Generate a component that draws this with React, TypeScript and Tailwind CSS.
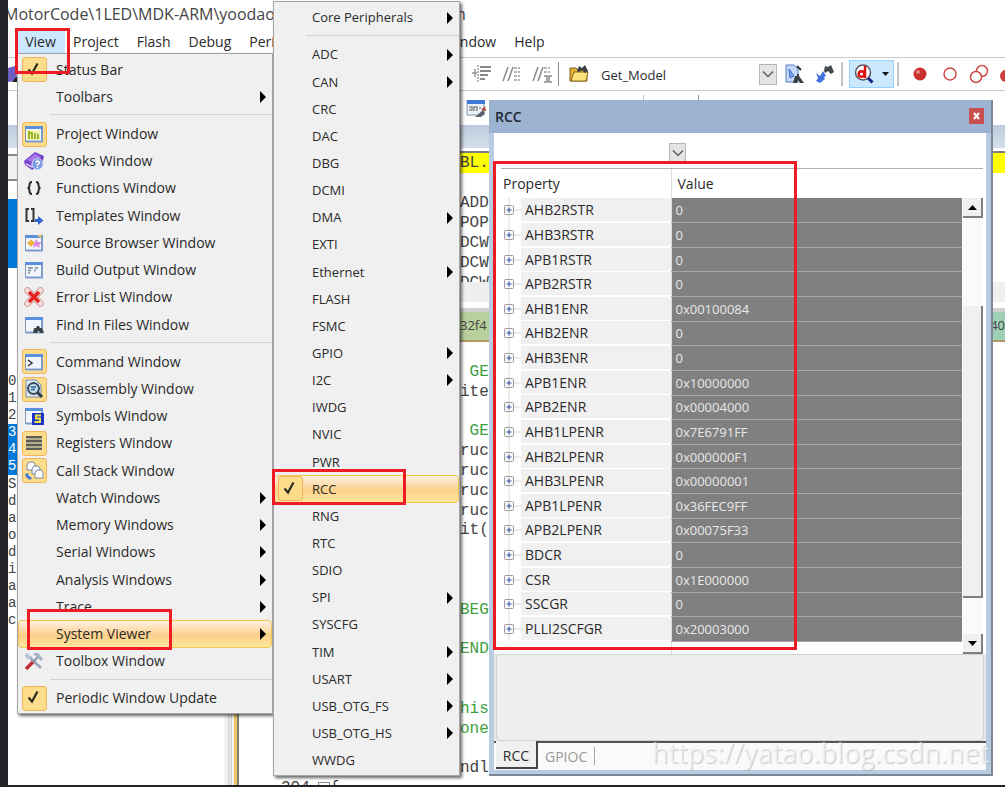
import React from 'react';
import clsx from 'clsx';

type MenuEntry = {
  label: string;
  icon?: React.ReactNode;
  on?: boolean;
  sub?: boolean;
  hot?: boolean;
};

function Check() {
  return (
    <svg width="18" height="18" viewBox="0 0 18 18" aria-hidden>
      <path d="M3.5 8.5 L7 12.5 L12.5 2.5" fill="none" stroke="#2b2b20" strokeWidth="2.2" />
    </svg>
  );
}

function Frame({ children }: { children?: React.ReactNode }) {
  return (
    <svg width="20" height="20" viewBox="0 0 20 20" aria-hidden>
      <rect x="1.5" y="2.5" width="17" height="15" fill="#f1f6fc" stroke="#8497b5" />
      <rect x="1" y="2" width="18" height="3" fill="#5c8fdc" />
      <path d="M18 5 V17.5 H2" fill="none" stroke="#7f9ccc" strokeWidth="2" />
      {children}
    </svg>
  );
}

const projectIcon = (
  <Frame>
    <rect x="3" y="6" width="13" height="10" fill="#eef3b8" />
    <path d="M5 7 V15 M5 9 H8 M8 8 V15 M11 9 V15 M14 10 V15" stroke="#9ab526" strokeWidth="2" />
  </Frame>
);
const booksIcon = (
  <svg width="20" height="20" viewBox="0 0 20 20" aria-hidden>
    <path d="M0 10 L11 1 L20 5 L18 14 L8 19 L1 14 Z" fill="#7b45cf" />
    <path d="M3 9 L11 3 L17 6 L9 11 Z" fill="#a67bea" />
    <path d="M2 13 L8 16 L9 12" fill="none" stroke="#d9c8f5" strokeWidth="1.5" />
    <circle cx="13.5" cy="13" r="5.5" fill="#7a9be0" stroke="#c9d8f8" />
    <path d="M11.5 11.5 Q13.5 8.5 15.5 11.5 Q15 13 13.5 13.5 V14.5 M13.5 15.5 V17" fill="none" stroke="#fff" strokeWidth="1.5" />
  </svg>
);
const functionsIcon = (
  <svg width="20" height="20" viewBox="0 0 20 20" aria-hidden>
    <path d="M8 4 Q5.5 4 5.5 7 Q5.5 10 3.5 10 Q5.5 10 5.5 13 Q5.5 16 8 16 M12 4 Q14.5 4 14.5 7 Q14.5 10 16.5 10 Q14.5 10 14.5 13 Q14.5 16 12 16" fill="none" stroke="#2c2c2c" strokeWidth="2" />
  </svg>
);
const templatesIcon = (
  <svg width="20" height="20" viewBox="0 0 20 20" aria-hidden>
    <path d="M5 3 H2.5 V15 H5 M7 3 H9.5 V15 H7" fill="none" stroke="#333" strokeWidth="2" />
    <path d="M11 13 H14 V10 L19.5 14.5 L14 19 V16 H11 Z" fill="#3064d8" />
  </svg>
);
const sourceIcon = (
  <Frame>
    <path d="M3 10 L7 6.5 L11 10 L7 14 Z" fill="#f0b53c" />
    <path d="M12 6 L14 9 L18 9 L15 12 L16 15 L12 13 L9 15 L10 11 Z" fill="#e08ae0" />
    <path d="M13 3 L17 1 L18 5" fill="#f4c864" />
  </Frame>
);
const buildIcon = (
  <Frame>
    <path d="M4 8 H9 M11 8 H14 M4 10.5 H7 M10 10.5 H12 M4 13 H6" stroke="#7c8798" strokeWidth="1.5" />
  </Frame>
);
const errorIcon = (
  <svg width="20" height="20" viewBox="0 0 20 20" aria-hidden>
    <path d="M3.5 3.5 L16.5 16.5 M16.5 3.5 L3.5 16.5" stroke="#c98d8b" strokeWidth="6.5" strokeLinecap="round" />
    <path d="M3.5 3.5 L16.5 16.5 M16.5 3.5 L3.5 16.5" stroke="#f3dcda" strokeWidth="5" strokeLinecap="round" />
    <path d="M5 5 L15 15 M15 5 L5 15" stroke="#e0221c" strokeWidth="3.5" />
  </svg>
);
const findIcon = (
  <Frame>
    <path d="M9 18 L10 13 H12 L13 11 H15 L16 13 H18 L20 18 H16 L15 16 H14 L13 18 Z" fill="#3c4148" />
  </Frame>
);
const commandIcon = (
  <Frame>
    <path d="M4 8 L8 11 L4 14" fill="none" stroke="#333" strokeWidth="1.5" />
  </Frame>
);
const disassemblyIcon = (
  <svg width="20" height="20" viewBox="0 0 20 20" aria-hidden>
    <path d="M2 1 H12 L17 6 V18 H2 Z" fill="#e3edf7" stroke="#7486a0" />
    <circle cx="9.5" cy="9.5" r="5.5" fill="#c5e0ea" stroke="#3c4d60" strokeWidth="2" />
    <path d="M7 8 H12 M7 10.5 H11" stroke="#2c5a92" strokeWidth="1.5" />
    <path d="M13.5 13.5 L18 18" stroke="#333d4a" strokeWidth="3" />
  </svg>
);
const symbolsIcon = (
  <Frame>
    <rect x="8" y="7" width="12" height="12" fill="#1d35c9" />
    <path d="M17 9.5 H12 V12.5 H16 V16 H10.5" fill="none" stroke="#f2e33a" strokeWidth="2" />
  </Frame>
);
const registersIcon = (
  <svg width="20" height="20" viewBox="0 0 20 20" aria-hidden>
    <rect x="2" y="3" width="16" height="14" fill="#b3ae92" />
    <path d="M2 4 H18 M2 8 H18 M2 12 H18 M2 16 H18" stroke="#5c5c55" strokeWidth="2" />
  </svg>
);
const callStackIcon = (
  <svg width="20" height="20" viewBox="0 0 20 20" aria-hidden>
    <path d="M3 4 L5 1 H9 L11 3 V9 H3 Z" fill="#fff" stroke="#7488a5" />
    <path d="M8 8 L10 5 H14 L16 7 V13 H8 Z" fill="#f3f7fc" stroke="#7488a5" />
    <path d="M11 12 L13 9 H17 L19 11 V17 H11 Z" fill="#fff" stroke="#7488a5" />
    <path d="M1 13 L5 12 L4 14 L8 17 L6 19 L2 16 Z" fill="#3f78d8" />
  </svg>
);
const toolboxIcon = (
  <svg width="20" height="20" viewBox="0 0 20 20" aria-hidden>
    <path d="M4 5 L17 17" stroke="#9aa9bd" strokeWidth="3" />
    <path d="M1 5 Q1 2 4 2 L5 5 L8 5 Q7 9 3 8" fill="#b7c4d4" />
    <path d="M2 18 L9 11" stroke="#c22f3a" strokeWidth="3.5" />
    <path d="M9 11 L14 6" stroke="#8794a6" strokeWidth="2" />
    <path d="M9 3 Q13 0 16 4 L19 8 L17 10 L13 6 Z" fill="#a3b2c6" />
  </svg>
);

const viewMenu: MenuEntry[][] = [
  [
    { label: 'Status Bar', icon: <Check />, on: true },
    { label: 'Toolbars', sub: true },
  ],
  [
    { label: 'Project Window', icon: projectIcon, on: true },
    { label: 'Books Window', icon: booksIcon },
    { label: 'Functions Window', icon: functionsIcon },
    { label: 'Templates Window', icon: templatesIcon },
    { label: 'Source Browser Window', icon: sourceIcon },
    { label: 'Build Output Window', icon: buildIcon },
    { label: 'Error List Window', icon: errorIcon },
    { label: 'Find In Files Window', icon: findIcon },
  ],
  [
    { label: 'Command Window', icon: commandIcon, on: true },
    { label: 'Disassembly Window', icon: disassemblyIcon, on: true },
    { label: 'Symbols Window', icon: symbolsIcon },
    { label: 'Registers Window', icon: registersIcon, on: true },
    { label: 'Call Stack Window', icon: callStackIcon, on: true },
    { label: 'Watch Windows', sub: true },
    { label: 'Memory Windows', sub: true },
    { label: 'Serial Windows', sub: true },
    { label: 'Analysis Windows', sub: true },
    { label: 'Trace', sub: true },
    { label: 'System Viewer', sub: true, hot: true },
    { label: 'Toolbox Window', icon: toolboxIcon },
  ],
  [{ label: 'Periodic Window Update', icon: <Check />, on: true }],
];

const peripherals: MenuEntry[][] = [
  [{ label: 'Core Peripherals', sub: true }],
  [
    { label: 'ADC', sub: true },
    { label: 'CAN', sub: true },
    { label: 'CRC' },
    { label: 'DAC' },
    { label: 'DBG' },
    { label: 'DCMI' },
    { label: 'DMA', sub: true },
    { label: 'EXTI' },
    { label: 'Ethernet', sub: true },
    { label: 'FLASH' },
    { label: 'FSMC' },
    { label: 'GPIO', sub: true },
    { label: 'I2C', sub: true },
    { label: 'IWDG' },
    { label: 'NVIC' },
    { label: 'PWR' },
    { label: 'RCC', icon: <Check />, on: true, hot: true },
    { label: 'RNG' },
    { label: 'RTC' },
    { label: 'SDIO' },
    { label: 'SPI', sub: true },
    { label: 'SYSCFG' },
    { label: 'TIM', sub: true },
    { label: 'USART', sub: true },
    { label: 'USB_OTG_FS', sub: true },
    { label: 'USB_OTG_HS', sub: true },
    { label: 'WWDG' },
  ],
];

const registers: [string, string][] = [
  ['AHB2RSTR', '0'],
  ['AHB3RSTR', '0'],
  ['APB1RSTR', '0'],
  ['APB2RSTR', '0'],
  ['AHB1ENR', '0x00100084'],
  ['AHB2ENR', '0'],
  ['AHB3ENR', '0'],
  ['APB1ENR', '0x10000000'],
  ['APB2ENR', '0x00004000'],
  ['AHB1LPENR', '0x7E6791FF'],
  ['AHB2LPENR', '0x000000F1'],
  ['AHB3LPENR', '0x00000001'],
  ['APB1LPENR', '0x36FEC9FF'],
  ['APB2LPENR', '0x00075F33'],
  ['BDCR', '0'],
  ['CSR', '0x1E000000'],
  ['SSCGR', '0'],
  ['PLLI2SCFGR', '0x20003000'],
];

const codeLines = [
  ' GE', 'ite', '', ' GE', 'ruc', 'ruc', 'ruc', 'ruc', 'it(', '', '', '',
  'BEG', '', 'END', '', '', 'his', 'one', '', 'ndl',
];
const comments = [' GE', 'BEG', 'END', 'his', 'one'];

function Menu({ groups, className }: { groups: MenuEntry[][]; className: string }) {
  return (
    <div
      role="menu"
      className={clsx(
        'absolute flex flex-col border border-[#a5a5a5] bg-[#f0f0f0] pt-0.5 pb-px shadow-[2px_2px_3px_rgba(0,0,0,0.6)]',
        className,
      )}
    >
      {groups.map((group, g) => (
        <React.Fragment key={g}>
          {g > 0 && (
            <div className="h-2.5 shrink-0 pt-1 pl-8">
              <div className="h-px bg-[#d4d4d4]" />
            </div>
          )}
          {group.map((item) => (
            <button
              key={item.label}
              role="menuitem"
              className={clsx(
                'flex min-h-0 flex-1 items-center rounded-sm border pr-1 text-left',
                item.hot
                  ? 'border-[#f0c552] bg-linear-to-b from-[#fdf1e2] via-[#fcd08a] via-55% to-[#fee79c]'
                  : 'border-transparent',
              )}
            >
              <span className="flex w-[30px] shrink-0 justify-center">
                {item.icon && (
                  <span
                    className={clsx(
                      'flex h-[25px] w-[25px] items-center justify-center rounded-[3px]',
                      item.on && 'border border-[#f2b45c] bg-[#fddd8c]',
                    )}
                  >
                    {item.icon}
                  </span>
                )}
              </span>
              <span className="grow pl-[7px]">{item.label}</span>
              {item.sub && (
                <svg width="8" height="12" viewBox="0 0 8 12" aria-hidden>
                  <path d="M1 0 L7 6 L1 12 Z" fill="#000" />
                </svg>
              )}
            </button>
          ))}
        </React.Fragment>
      ))}
    </div>
  );
}

function Chevron() {
  return (
    <svg width="12" height="8" viewBox="0 0 12 8" aria-hidden>
      <path d="M1 1.5 L6 6.5 L11 1.5" fill="none" stroke="#606060" strokeWidth="1.5" />
    </svg>
  );
}

function Toolbar() {
  return (
    <div className="flex h-[34px] shrink-0 items-center border-y border-[#c8c8c8] bg-white text-[13px]">
      <svg className="shrink-0" width="9" height="18" viewBox="0 0 9 18" aria-hidden>
        <path d="M0 3 L7 1 L9 9 L7 16 L0 17 Z" fill="#6f5fc4" />
        <path d="M4 17 L9 11 V17 Z" fill="#222" />
      </svg>
      <div className="ml-[455px] flex shrink-0 items-center gap-2.5">
        <button aria-label="Indent">
          <svg width="20" height="20" viewBox="0 0 20 20" aria-hidden>
            <path d="M8 3 H19 M8 7 H19 M8 11 H16 M8 15 H13" stroke="#8a8a8a" strokeWidth="2" />
            <path d="M6 1 V19" stroke="#777" strokeDasharray="2 1" />
            <path d="M0 9 H5 M3 5 V13" stroke="#999" strokeWidth="1.5" />
          </svg>
        </button>
        <button aria-label="Comment">
          <svg width="20" height="20" viewBox="0 0 20 20" aria-hidden>
            <path d="M1 17 L6 3 M6 17 L11 3" stroke="#8a8a8a" strokeWidth="1.5" />
            <path d="M12 4 H18 M12 8 H18 M12 12 H18 M12 16 H18" stroke="#9a9a9a" strokeWidth="1.5" strokeDasharray="3 1" />
          </svg>
        </button>
        <button aria-label="Uncomment">
          <svg width="20" height="20" viewBox="0 0 20 20" aria-hidden>
            <path d="M1 17 L6 3 M6 17 L11 3" stroke="#8a8a8a" strokeWidth="1.5" />
            <path d="M12 4 H18 M12 8 H18" stroke="#9a9a9a" strokeWidth="1.5" strokeDasharray="3 1" />
            <path d="M12 12 H15 V18 H12 M20 12 H17 V18 H20" fill="none" stroke="#8a8a8a" strokeWidth="1.5" />
          </svg>
        </button>
      </div>
      <div className="ml-1.5 h-6 w-px shrink-0 bg-[#8c8c8c]" />
      <button aria-label="Options" className="ml-2.5 shrink-0">
        <svg width="20" height="20" viewBox="0 0 20 20" aria-hidden>
          <path d="M1 4 H7 L9 6 H18 V17 H1 Z" fill="#e3b23a" stroke="#7a5c1c" />
          <path d="M2 17 L5 8 H19 L17 17 Z" fill="#fbe27a" stroke="#8a6a20" />
          <path d="M8 7 L10 2 L13 4 L16 1 L19 7 L16 9 L13 6 L10 8 Z" fill="#3b4048" />
        </svg>
      </button>
      <div className="ml-2 flex w-[180px] shrink-0 items-center">
        <select aria-label="Target" className="h-6 min-w-0 grow appearance-none bg-white px-1 pt-0.5 outline-none">
          <option>Get_Model</option>
        </select>
        <span className="flex h-[21px] w-[18px] shrink-0 items-center justify-center border border-[#b5b5b5] bg-[#e4e4e4]">
          <Chevron />
        </span>
      </div>
      <button aria-label="Find in document" className="ml-2 shrink-0">
        <svg width="20" height="20" viewBox="0 0 20 20" aria-hidden>
          <path d="M1 1 H9 L13 5 V18 H1 Z" fill="#c3d7f8" stroke="#5b7fc2" />
          <path d="M4 5 L9 12 L5 14 Z" fill="#7fa2ec" stroke="#3d6cd0" />
          <path d="M12 2 L16 6" stroke="#333" strokeWidth="2" />
          <path d="M8 19 L10 12 H12 V10 H14 V12 L19 19 H15 L13 16 L12 19 Z" fill="#3a3f44" />
        </svg>
      </button>
      <button aria-label="Find next" className="ml-2.5 shrink-0">
        <svg width="20" height="20" viewBox="0 0 20 20" aria-hidden>
          <path d="M9 7 L10 2 L13 3 L16 1 L19 8 L16 10 L13 7 L10 9 Z" fill="#43484e" />
          <path d="M1 9 L5 12 L8 7 L11 12 L9 13 L10 15 L5 19 L1 17 L3 14 Z" fill="#4473df" />
        </svg>
      </button>
      <div className="ml-1.5 h-6 w-0.5 shrink-0 bg-[#c4c4c4]" />
      <button
        aria-label="Debug session"
        className="ml-1.5 flex h-7 w-[45px] shrink-0 items-center gap-2 border border-[#99d1ff] bg-[#cce8ff] pl-1"
      >
        <svg width="20" height="20" viewBox="0 0 20 20" aria-hidden>
          <circle cx="9" cy="8.5" r="7.5" fill="#fff" stroke="#5b5560" strokeWidth="1.5" />
          <circle cx="7.5" cy="10" r="2.8" fill="none" stroke="#e01010" strokeWidth="2.5" />
          <path d="M11 2 V14" stroke="#e01010" strokeWidth="2.5" />
          <path d="M14 14 L18.5 18.5" stroke="#1a237e" strokeWidth="3" />
        </svg>
        <svg width="7" height="4" viewBox="0 0 7 4" aria-hidden>
          <path d="M0 0 H7 L3.5 4 Z" fill="#111" />
        </svg>
      </button>
      <div className="ml-[3px] h-6 w-0.5 shrink-0 bg-[#c4c4c4]" />
      <button aria-label="Insert breakpoint" className="ml-3.5 shrink-0">
        <svg width="14" height="14" viewBox="0 0 14 14" aria-hidden>
          <circle cx="7" cy="7" r="6.5" fill="#c9302c" />
          <circle cx="5" cy="5" r="2" fill="#e58a85" />
        </svg>
      </button>
      <button aria-label="Disable breakpoint" className="ml-4 shrink-0">
        <svg width="14" height="14" viewBox="0 0 14 14" aria-hidden>
          <circle cx="7" cy="7" r="6" fill="#fff" stroke="#cf4a46" strokeWidth="1.5" />
        </svg>
      </button>
      <button aria-label="Disable all breakpoints" className="ml-3 shrink-0">
        <svg width="20" height="20" viewBox="0 0 20 20" aria-hidden>
          <circle cx="13" cy="7" r="5.5" fill="#fff" stroke="#cf4a46" strokeWidth="1.5" />
          <circle cx="7" cy="13" r="5.5" fill="#fff" stroke="#cf4a46" strokeWidth="1.5" />
        </svg>
      </button>
      <button aria-label="Kill all breakpoints" className="ml-2.5 shrink-0">
        <svg width="20" height="20" viewBox="0 0 20 20" aria-hidden>
          <circle cx="13" cy="6" r="5" fill="#d4534f" />
          <circle cx="7" cy="12" r="6" fill="#c9403c" />
        </svg>
      </button>
    </div>
  );
}

function LeftPane() {
  return (
    <div className="flex w-[216px] shrink-0 flex-col bg-white">
      <div className="h-[23px] bg-linear-to-b from-[#bccbdc] to-[#d6e0ec]" />
      <div className="mt-1.5 h-[27px] border-y-2 border-[#8a8a8a] bg-[#f0f0f0]" />
      <div className="mt-[18px] h-[69px] bg-[#0078d7]" />
      <div className="mt-[105px] font-['Liberation_Mono',monospace] text-sm leading-[17px] text-[#444]">
        <p>0</p>
        <p>1</p>
        <p>2</p>
        <div className="mb-px w-2.5 bg-[#0078d7] text-white">
          <p>3</p>
          <p>4</p>
          <p>5</p>
        </div>
        {['S', 'd', 'a', 'o', 'd', 'i', 'a', 'a', 'c'].map((ch, i) => (
          <p key={i}>{ch}</p>
        ))}
      </div>
    </div>
  );
}

function Editor() {
  return (
    <div className="flex min-w-0 grow flex-col overflow-hidden bg-white font-['Liberation_Mono',monospace] text-base text-[#444]">
      <div className="h-[23px] shrink-0 bg-linear-to-b from-[#bccbdc] to-[#d6e0ec]" />
      <div className="mt-[3px] h-0.5 shrink-0 bg-[#7d7d7d]" />
      <p className="h-5 shrink-0 bg-[#ffff00] pl-[221px] leading-5">BL.</p>
      <div className="mt-5 h-[89px] shrink-0 overflow-hidden pl-[221px] leading-5">
        <p>ADD</p>
        <p>POP</p>
        <p>DCW</p>
        <p>DCW</p>
        <p>DCW</p>
      </div>
      <div className="h-5 shrink-0 bg-[#efefef]" />
      <div className="mt-1.5 flex h-[34px] shrink-0 items-center border-t-4 border-b-2 border-t-[#d0d0d0] border-b-[#b09a68] bg-[#b9d09c] font-['Open_Sans',sans-serif] text-[13px]">
        <span className="pl-[221px]">32f4</span>
        <span className="ml-auto flex h-full w-[105px] items-center justify-end bg-[#9fd0b6]">40</span>
      </div>
      <div className="mt-5 flex h-[416px] shrink-0 flex-col pl-[221px]">
        {codeLines.map((line, i) => (
          <pre
            key={i}
            className={clsx(
              "flex min-h-0 flex-1 items-center font-['Liberation_Mono',monospace]",
              comments.includes(line) && 'text-[#3f9f3f]',
            )}
          >
            {line}
          </pre>
        ))}
      </div>
      <div className="flex pl-[42px] leading-5">
        <span>304</span>
        <span className="mt-1 ml-2 h-3 w-3 border border-[#888]" />
        <span>{'{'}</span>
      </div>
    </div>
  );
}

function ScrollButton({ down }: { down?: boolean }) {
  return (
    <button
      aria-label={down ? 'Scroll down' : 'Scroll up'}
      className="flex h-5 shrink-0 items-center justify-center border-r-2 border-b-2 border-[#808080] bg-[#f0f0f0]"
    >
      <svg width="9" height="5" viewBox="0 0 9 5" aria-hidden>
        <path d={down ? 'M0 0 H9 L4.5 5 Z' : 'M0 5 H9 L4.5 0 Z'} fill="#000" />
      </svg>
    </button>
  );
}

function RccWindow() {
  return (
    <section className="absolute top-[100px] right-3 left-[489px] flex h-[676px] flex-col border-r-2 border-b-2 border-[#7b8794] bg-[#b8cde2] px-[5px] pb-1">
      <header className="-mx-[5px] flex h-[33px] shrink-0 items-center justify-between bg-[#9cb4d1] pr-[7px] pl-1.5">
        <h2 className="font-semibold text-[#1c2733]">RCC</h2>
        <button aria-label="Close" className="mb-0.5 flex h-4 w-[15px] items-center justify-center bg-[#c8504f]">
          <svg width="7" height="8" viewBox="0 0 7 8" aria-hidden>
            <path d="M1 1 L6 7 M6 1 L1 7" stroke="#fff" strokeWidth="2" />
          </svg>
        </button>
      </header>
      <div className="flex h-[35px] shrink-0 items-center bg-white pt-1">
        <select aria-label="Peripheral" className="h-[19px] w-[175px] appearance-none bg-white outline-none" />
        <span className="flex h-[19px] w-[17px] items-center justify-center border border-[#b5b5b5] bg-[#e4e4e4]">
          <Chevron />
        </span>
      </div>
      <div className="flex h-[486px] shrink-0 bg-white pr-[3px] pl-[7px]">
        <div className="flex min-w-0 grow flex-col border-t border-[#b0b0b0]">
          <table className="h-[473px] w-full table-fixed border-collapse text-left">
            <thead>
              <tr className="h-[29px]">
                <th className="w-[170px] pl-0.5 font-normal">Property</th>
                <th className="border-l border-[#dcdcdc] pl-1.5 font-normal">Value</th>
              </tr>
            </thead>
            <tbody>
              {registers.map(([name, value]) => (
                <tr key={name} className="leading-6">
                  <td className="p-0">
                    <div className="flex items-center">
                      <span className="flex w-5 shrink-0 items-center">
                        <svg width="20" height="24" viewBox="0 0 20 24" aria-hidden>
                          <path d="M8 0 V24 M8 12 H20" stroke="#d8d8d8" />
                          <rect x="3.5" y="7.5" width="9" height="9" rx="1" fill="#f7f7f7" stroke="#9a9a9a" />
                          <path d="M5.5 12 H10.5 M8 9.5 V14.5" stroke="#3c59a8" strokeWidth="1.2" />
                        </svg>
                      </span>
                      <span className="h-6 grow border-b border-white bg-[#f0f0f0] pl-1">{name}</span>
                    </div>
                  </td>
                  <td className="border-b border-l border-b-[#a6a6a6] border-l-[#dcdcdc] bg-[#808080] p-0 pl-1 text-[13px] leading-5 text-[#e8e8e8]">
                    {value}
                  </td>
                </tr>
              ))}
            </tbody>
          </table>
          <div className="ml-[170px] grow border-l border-[#dcdcdc]" />
        </div>
        <div className="flex w-[21px] shrink-0 flex-col border-t border-[#b0b0b0] pt-[29px] pl-px">
          <ScrollButton />
          <div className="flex grow flex-col bg-[#fafafa] pt-[88px] pb-9">
            <div className="grow border-r-2 border-b-2 border-[#808080] bg-[#f0f0f0]" />
          </div>
          <ScrollButton down />
        </div>
      </div>
      <div className="grow bg-[#e8e8e8] px-0.5">
        <div className="h-full rounded border border-[#d0d0d0] bg-[#efefef]" />
      </div>
      <footer className="flex h-[29px] shrink-0 border-t-2 border-[#555] bg-[#fafafa] pb-px">
        <button className="-mt-0.5 ml-0.5 w-[42px] border-r-2 border-b-2 border-[#444] bg-[#f0f0f0] pt-1">RCC</button>
        <button className="px-[7px] pt-0.5 text-[#999]">GPIOC</button>
        <span className="my-1 w-px bg-[#aaa]" />
      </footer>
    </section>
  );
}

export default function App() {
  return (
    <div className="relative h-screen w-full overflow-hidden bg-[#232328] pb-0.5 pl-2 font-['Open_Sans',sans-serif] text-sm text-[#2a2a2a]">
      <main className="flex h-full flex-col overflow-hidden bg-white">
        <div className="flex h-7 shrink-0 items-center text-base text-[#444]">
          <span className="-ml-1 w-[452px]">MotorCode\1LED\MDK-ARM\yoodao</span>
          <span>h</span>
        </div>
        <nav className="flex h-[29px] shrink-0 items-center pb-0.5">
          <button className="ml-2 h-[26px] w-[49px] bg-[#cce8ff]">View</button>
          <button className="ml-2">Project</button>
          <button className="ml-4.5">Flash</button>
          <button className="ml-4.5">Debug</button>
          <button className="ml-4.5">Peri</button>
          <button className="ml-[185px]">ndow</button>
          <button className="ml-4.5">Help</button>
        </nav>
        <Toolbar />
        <div className="flex h-[34px] shrink-0 items-start pt-1">
          <button aria-label="Logic analyzer" className="mt-1 ml-[458px]">
            <svg width="20" height="20" viewBox="0 0 20 20" aria-hidden>
              <rect x="1" y="2" width="17" height="14" fill="#eef3fa" stroke="#8494ad" />
              <rect x="1" y="1" width="18" height="4" fill="#3f78d8" />
              <path d="M3 8 H6 V11 H3 M8 12 V8 H11 V12 M13 9 H15" fill="none" stroke="#888" strokeWidth="1.5" />
              <path d="M9 18 L17 11 L19 14 L15 18 Z" fill="#59606b" />
              <path d="M15 11 L19 7 L20 12 Z" fill="#a8483e" />
            </svg>
          </button>
          <div className="ml-[157px] h-2 w-px bg-[#c8c8c8]" />
          <div className="ml-[54px] h-2 w-px bg-[#999]" />
        </div>
        <div className="flex min-h-0 grow">
          <LeftPane />
          <div className="flex w-[15px] shrink-0 border-r-2 border-[#808080] bg-[#f4f4f4] pl-1">
            <div className="w-1 border-x border-[#d0d0d0] bg-[#e6e6e6]" />
            <div className="ml-0.5 w-[3px] bg-[#e9c766]" />
          </div>
          <Editor />
        </div>
      </main>

      <Menu groups={viewMenu} className="top-[53px] left-[17px] h-[661px] w-64" />
      <RccWindow />
      <Menu groups={peripherals} className="top-px left-[273px] h-[775px] w-[187px] text-[13px]" />

      <p className="absolute right-4 bottom-3.5 text-[27px] text-white/60 [text-shadow:1px_1px_1px_#aaaaaa99]">
        https://yatao.blog.csdn.net
      </p>

      {/* callouts */}
      <div className="pointer-events-none absolute top-7 left-[15px] h-[46px] w-[55px] border-3 border-[#ed1c24]" />
      <div className="pointer-events-none absolute top-[609px] left-[27px] h-[41px] w-[145px] border-3 border-[#ed1c24]" />
      <div className="pointer-events-none absolute top-[469px] left-[272px] h-9 w-[134px] border-3 border-[#ed1c24]" />
      <div className="pointer-events-none absolute top-[161px] left-[493px] h-[489px] w-[304px] border-3 border-[#ed1c24]" />
    </div>
  );
}
